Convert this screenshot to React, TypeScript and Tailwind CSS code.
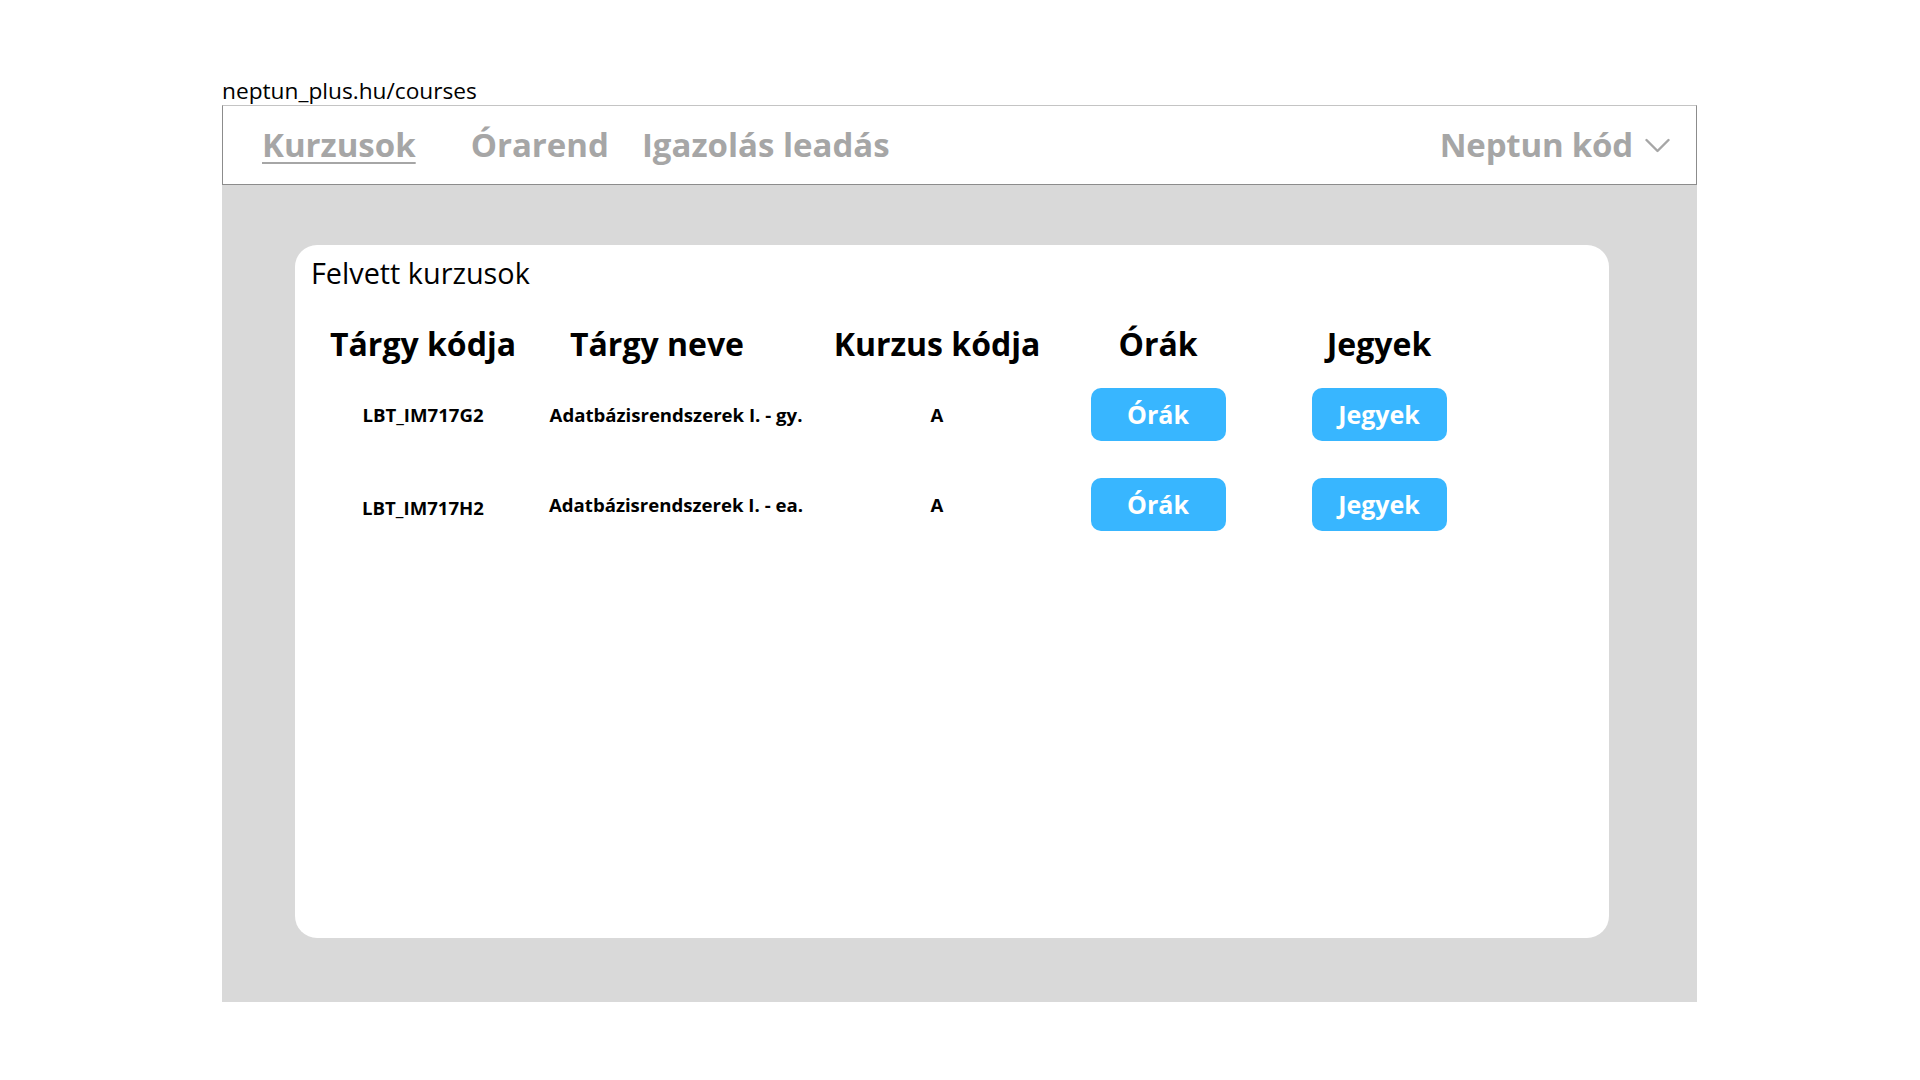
import React from "react";

const cols = "grid grid-cols-[220px_284px_240px_202px_240px] items-center justify-items-center";

function Btn({ children }: { children: React.ReactNode }) {
  return (
    <button className="w-[135px] h-[53px] rounded-[10px] bg-[#38b6ff] text-white text-[25px] font-bold leading-none flex items-center justify-center">
      {children}
    </button>
  );
}

export default function App() {
  const rows = [
    { code: "LBT_IM717G2", name: "Adatbázisrendszerek I. - gy.", k: "A", off: "" },
    { code: "LBT_IM717H2", name: "Adatbázisrendszerek I. - ea.", k: "A", off: "mt-[7px]" },
  ];
  return (
    <div className="w-full h-screen bg-white" style={{ fontFamily: '"Open Sans", "Noto Sans", sans-serif' }}>
      <div className="ml-[222px] w-[1475px] pt-[76px]">
        <div className="text-[22.7px] leading-[29px] text-black">neptun_plus.hu/courses</div>
        <div className="h-[80px] border border-[#8c8c8c] border-t-[#c4c4c4] bg-white flex items-center pl-[39px] pr-[26px] text-[#a6a6a6] text-[33px] font-bold">
          <span className="underline decoration-2 underline-offset-[5px]">Kurzusok</span>
          <span className="ml-[55px]">Órarend</span>
          <span className="ml-[33px]">Igazolás leadás</span>
          <span className="ml-auto flex items-center">
            <span className="tracking-[-0.2px]">Neptun kód</span>
            <svg className="ml-[12px]" width="25" height="15" viewBox="0 0 25 15" fill="none">
              <polyline points="1.5,2 12.5,13 23.5,2" stroke="#a6a6a6" strokeWidth="2.4" strokeLinecap="round" strokeLinejoin="round" />
            </svg>
          </span>
        </div>
        <div className="h-[817px] bg-[#d9d9d9] pt-[60px] pl-[73px]">
          <div className="w-[1314px] h-[693px] bg-white rounded-[22px] pt-[8px]">
            <div className="pl-[16px] text-[28.8px] leading-[39px] text-black">Felvett kurzusok</div>
            <div className="pl-[18px] mt-[30px] text-black">
              <div className={`${cols} h-[44px] text-[32px] font-bold leading-[44px]`}>
                <span>Tárgy kódja</span>
                <span className="pr-[36px]">Tárgy neve</span>
                <span>Kurzus kódja</span>
                <span>Órák</span>
                <span>Jegyek</span>
              </div>
              {rows.map((r, i) => (
                <div key={i} className={`${cols} h-[53px] text-[18.6px] font-bold ${i === 0 ? "mt-[22px]" : "mt-[37px]"}`}>
                  <span className={r.off}>{r.code}</span>
                  <span className="pl-[2px]">{r.name}</span>
                  <span>{r.k}</span>
                  <Btn>Órák</Btn>
                  <Btn>Jegyek</Btn>
                </div>
              ))}
            </div>
          </div>
        </div>
      </div>
    </div>
  );
}
